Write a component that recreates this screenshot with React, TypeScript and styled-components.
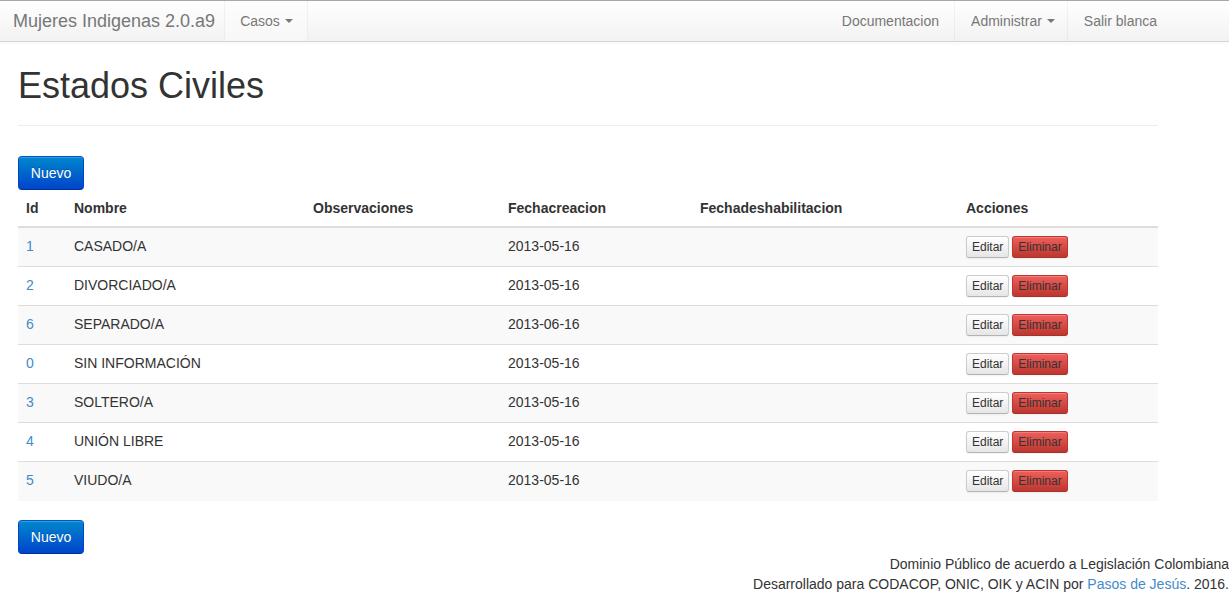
import React from "react";
import styled, { createGlobalStyle } from "styled-components";

const Global = createGlobalStyle`
  html, body { margin: 0; padding: 0; background: #fff; }
  body {
    font-family: "Liberation Sans", Arial, Helvetica, sans-serif;
    font-size: 14px;
    line-height: 20px;
    color: #333;
  }
  * { box-sizing: border-box; }
`;

const Navbar = styled.nav`
  height: 42px;
  border-top: 1px solid #a8a8a8;
  border-bottom: 1px solid #d4d4d4;
  background: linear-gradient(to bottom, #ffffff 0%, #f2f2f2 100%);
  box-shadow: 0 1px 4px rgba(0, 0, 0, 0.04);
  display: flex;
  width: 100%;
`;

const NavInner = styled.div`
  width: 1173px;
  display: flex;
  justify-content: space-between;
  align-items: stretch;
`;

const NavGroup = styled.div`
  display: flex;
  align-items: stretch;
`;

const Brand = styled.a`
  display: flex;
  align-items: center;
  padding: 0 9px 0 13px;
  font-size: 18px;
  color: #777;
  text-decoration: none;
`;

const NavItem = styled.a<{ $edge?: boolean; $last?: boolean; $pr?: number }>`
  display: flex;
  align-items: center;
  padding: 0 ${(p) => p.$pr ?? 15}px 0 15px;
  color: #777;
  text-decoration: none;
  font-size: 14px;
  border-left: 1px solid ${(p) => (p.$edge ? "rgba(0,0,0,0.045)" : "transparent")};
  border-right: 1px solid ${(p) => (p.$last ? "transparent" : "rgba(0,0,0,0.045)")};
  background: ${(p) => (p.$edge ? "linear-gradient(to bottom, #fdfdfd, #f7f7f7)" : "transparent")};
`;

const Caret = styled.span`
  display: inline-block;
  width: 0;
  height: 0;
  margin-left: 5px;
  border-top: 4px solid #777;
  border-left: 4px solid transparent;
  border-right: 4px solid transparent;
  vertical-align: middle;
`;

const Container = styled.main`
  width: 1173px;
  padding: 0 15px 0 18px;
`;

const PageHeader = styled.div`
  margin: 24px 0 30px;
  padding-bottom: 9px;
  border-bottom: 1px solid #eee;
  width: 1140px;
`;

const Title = styled.h1`
  margin: 0 0 10px;
  font-size: 36px;
  font-weight: 400;
  line-height: 40px;
  color: #333;
`;

const PrimaryButton = styled.a`
  display: inline-block;
  vertical-align: top;
  width: 66px;
  height: 34px;
  line-height: 32px;
  text-align: center;
  color: #fff;
  font-size: 14px;
  text-decoration: none;
  border: 1px solid #0044cc;
  border-color: #0055cc #0044cc #003399;
  border-radius: 4px;
  background: linear-gradient(to bottom, #0088cc 0%, #0044cc 100%);
  text-shadow: 0 -1px 0 rgba(0, 0, 0, 0.2);
  box-shadow: inset 0 1px 0 rgba(255, 255, 255, 0.2);
`;

const ButtonBar = styled.div`
  height: 34px;
`;

const Table = styled.table`
  width: 1140px;
  border-collapse: collapse;
  border-spacing: 0;
  margin-bottom: 19px;
  table-layout: fixed;
`;

const Th = styled.th<{ $w: number }>`
  width: ${(p) => p.$w}px;
  text-align: left;
  font-weight: 700;
  padding: 8px;
  line-height: 20px;
  border-bottom: 2px solid #ddd;
  vertical-align: bottom;
`;

const Row = styled.tr<{ $striped: boolean }>`
  background: ${(p) => (p.$striped ? "#f9f9f9" : "transparent")};
`;

const Td = styled.td`
  padding: 8px;
  height: 39px;
  line-height: 20px;
  vertical-align: top;
  border-top: 1px solid #ddd;
`;

const IdLink = styled.a`
  color: #428bca;
  text-decoration: none;
`;

const SmallButton = styled.a<{ $danger?: boolean }>`
  display: inline-block;
  vertical-align: top;
  height: 22px;
  line-height: 20px;
  padding: 0 5px;
  margin-right: 3px;
  font-size: 12px;
  color: #333;
  text-decoration: none;
  border-radius: 3px;
  border: 1px solid ${(p) => (p.$danger ? "#bd362f" : "#ccc")};
  border-bottom-color: ${(p) => (p.$danger ? "#a5322c" : "#b3b3b3")};
  background: ${(p) =>
    p.$danger
      ? "linear-gradient(to bottom, #ee5f5b 0%, #bd362f 100%)"
      : "linear-gradient(to bottom, #ffffff 0%, #e6e6e6 100%)"};
  box-shadow: inset 0 1px 0 rgba(255, 255, 255, 0.2), 0 1px 2px rgba(0, 0, 0, 0.05);
`;

const Footer = styled.footer`
  text-align: right;
  font-size: 14px;
  line-height: 20px;
  color: #333;
  width: 100%;
`;

const FooterLink = styled.a`
  color: #428bca;
  text-decoration: none;
`;

const columns: [string, number][] = [
  ["Id", 48],
  ["Nombre", 239],
  ["Observaciones", 195],
  ["Fechacreacion", 192],
  ["Fechadeshabilitacion", 266],
  ["Acciones", 200],
];

const rows = [
  ["1", "CASADO/A", "2013-05-16"],
  ["2", "DIVORCIADO/A", "2013-05-16"],
  ["6", "SEPARADO/A", "2013-06-16"],
  ["0", "SIN INFORMACIÓN", "2013-05-16"],
  ["3", "SOLTERO/A", "2013-05-16"],
  ["4", "UNIÓN LIBRE", "2013-05-16"],
  ["5", "VIUDO/A", "2013-05-16"],
];

export default function App() {
  return (
    <>
      <Global />
      <Navbar>
        <NavInner>
          <NavGroup>
            <Brand href="#">Mujeres Indigenas 2.0.a9</Brand>
            <NavItem href="#" $edge $pr={14}>
              Casos <Caret />
            </NavItem>
          </NavGroup>
          <NavGroup>
            <NavItem href="#">Documentacion</NavItem>
            <NavItem href="#" $pr={12}>
              Administrar <Caret />
            </NavItem>
            <NavItem href="#" $last>
              Salir blanca
            </NavItem>
          </NavGroup>
        </NavInner>
      </Navbar>
      <Container>
        <PageHeader>
          <Title>Estados Civiles</Title>
        </PageHeader>
        <ButtonBar>
          <PrimaryButton href="#">Nuevo</PrimaryButton>
        </ButtonBar>
        <Table>
          <thead>
            <tr>
              {columns.map(([c, w]) => (
                <Th key={c} $w={w}>
                  {c}
                </Th>
              ))}
            </tr>
          </thead>
          <tbody>
            {rows.map(([id, nombre, fecha], i) => (
              <Row key={id} $striped={i % 2 === 0}>
                <Td>
                  <IdLink href="#">{id}</IdLink>
                </Td>
                <Td>{nombre}</Td>
                <Td></Td>
                <Td>{fecha}</Td>
                <Td></Td>
                <Td>
                  <SmallButton href="#">Editar</SmallButton>
                  <SmallButton href="#" $danger>
                    Eliminar
                  </SmallButton>
                </Td>
              </Row>
            ))}
          </tbody>
        </Table>
        <ButtonBar>
          <PrimaryButton href="#">Nuevo</PrimaryButton>
        </ButtonBar>
      </Container>
      <Footer>
        Dominio Público de acuerdo a Legislación Colombiana
        <br />
        Desarrollado para CODACOP, ONIC, OIK y ACIN por{" "}
        <FooterLink href="#">Pasos de Jesús</FooterLink>. 2016.
      </Footer>
    </>
  );
}
